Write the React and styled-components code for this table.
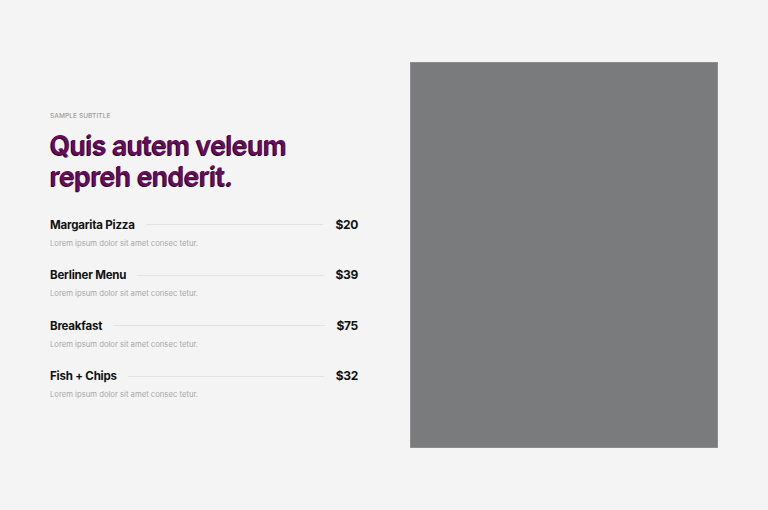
import React from "react";
import styled, { createGlobalStyle } from "styled-components";

const GlobalStyle = createGlobalStyle`
  html, body {
    margin: 0;
    padding: 0;
    background: #f4f4f4;
  }
  body {
    font-family: "Inter", "Noto Sans", sans-serif;
  }
`

const Page = styled.div`
  height: 510px;
  box-sizing: border-box;
  padding: 0 50px;
  display: grid;
  grid-template-columns: 308px 308px;
  column-gap: 52px;
  align-items: center;
`

const Content = styled.div`
  display: flex;
  flex-direction: column;
  padding-top: 2px;
`

const Subtitle = styled.div`
  font-size: 6.5px;
  line-height: 8px;
  font-weight: 500;
  color: #9a9a9a;
  text-transform: uppercase;
  letter-spacing: 0.1px;
`

const Heading = styled.h1`
  margin: 10px 0 26px;
  font-size: 26.5px;
  line-height: 31px;
  font-weight: 600;
  letter-spacing: -0.5px;
  color: #6a0c5a;
  text-shadow: -1px 1px 0 #1b1020;
`

const MenuList = styled.ul`
  list-style: none;
  margin: 0;
  padding: 0;
  display: flex;
  flex-direction: column;
  gap: 19.5px;
`

const Item = styled.li`
  display: flex;
  flex-direction: column;
  gap: 7px;
`

const ItemRow = styled.div`
  display: flex;
  align-items: center;
  gap: 11px;
`

const ItemName = styled.span`
  font-size: 11.5px;
  line-height: 14px;
  font-weight: 700;
  color: #111;
  letter-spacing: -0.2px;
`

const Dots = styled.span`
  flex: 1;
  height: 1px;
  background: #e2e2e2;
`

const Price = styled.span`
  font-size: 12px;
  line-height: 14px;
  font-weight: 700;
  color: #111;
  letter-spacing: -0.3px;
  padding-left: 1px;
`

const Desc = styled.div`
  font-size: 7.7px;
  line-height: 10px;
  color: #a8a8a8;
`

const Picture = styled.div`
  height: 386px;
  box-sizing: border-box;
  background: #7a7b7c;
  border: 1px solid #8c8c8c;
`

const menu = [
  { name: "Margarita Pizza", price: "$20" },
  { name: "Berliner Menu", price: "$39" },
  { name: "Breakfast", price: "$75" },
  { name: "Fish + Chips", price: "$32" },
];

const App = () => {
  return (
    <>
      <GlobalStyle />
      <Page>
        <Content>
          <Subtitle>Sample subtitle</Subtitle>
          <Heading>
            Quis autem veleum
            <br />
            repreh enderit.
          </Heading>
          <MenuList>
            {menu.map((m) => (
              <Item key={m.name}>
                <ItemRow>
                  <ItemName>{m.name}</ItemName>
                  <Dots />
                  <Price>{m.price}</Price>
                </ItemRow>
                <Desc>Lorem ipsum dolor sit amet consec tetur.</Desc>
              </Item>
            ))}
          </MenuList>
        </Content>
        <Picture />
      </Page>
    </>
  );
};

export default App;
